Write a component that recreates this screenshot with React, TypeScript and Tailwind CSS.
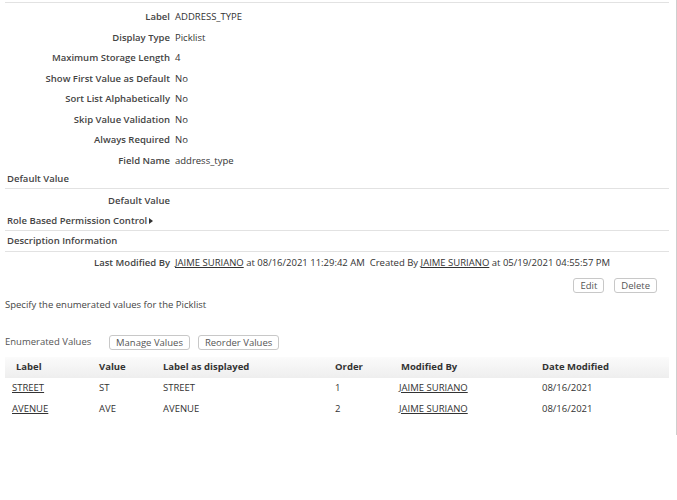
import React from "react";

const fields = [
  { label: "Label", value: "ADDRESS_TYPE" },
  { label: "Display Type", value: "Picklist" },
  { label: "Maximum Storage Length", value: "4" },
  { label: "Show First Value as Default", value: "No" },
  { label: "Sort List Alphabetically", value: "No" },
  { label: "Skip Value Validation", value: "No" },
  { label: "Always Required", value: "No" },
  { label: "Field Name", value: "address_type" },
];

const rows = [
  { label: "STREET", value: "ST", shown: "STREET", order: "1", by: "JAIME SURIANO", date: "08/16/2021" },
  { label: "AVENUE", value: "AVE", shown: "AVENUE", order: "2", by: "JAIME SURIANO", date: "08/16/2021" },
];

function Btn({ children }: { children: React.ReactNode }) {
  return (
    <button className="h-[15px] rounded-[3px] border border-[#c8c8c8] bg-white px-[6px] text-[9.5px] leading-[13px] text-[#555]">
      {children}
    </button>
  );
}

export default function App() {
  return (
    <div className="relative h-[500px] w-[677px] bg-white text-[9.5px] text-[#333]" style={{ fontFamily: '"Open Sans", "Liberation Sans", sans-serif' }}>
      <div className="absolute right-0 top-0 h-[435px] w-px bg-[#cfcfcf]" />
      <div className="pr-[8px] pl-[5px] pt-[2px]">
        <div className="h-px bg-[#e2e2e2]" />

        {/* Field details */}
        <div className="pt-[4px]">
          {fields.map((f) => (
            <div key={f.label} className="flex h-[20.5px] items-center">
              <span className="w-[165px] text-right font-semibold text-[#444]">{f.label}</span>
              <span className="pl-[5px]">{f.value}</span>
            </div>
          ))}
        </div>

        <div className="flex h-[18px] items-center border-b border-[#e2e2e2] pl-[2px] font-semibold text-[#444]">Default Value</div>
        <div className="flex h-[23px] items-center">
          <span className="w-[165px] pt-[2px] text-right font-semibold text-[#444]">Default Value</span>
        </div>
        <div className="flex h-[19px] items-center border-b border-[#e2e2e2] pl-[2px] font-semibold text-[#444]">
          Role Based Permission Control
          <svg width="5" height="6" viewBox="0 0 5 6" className="ml-[2px]">
            <path d="M0 0L4 3L0 6Z" fill="#333" />
          </svg>
        </div>
        <div className="flex h-[21px] items-center border-b border-[#e2e2e2] pl-[2px] font-semibold text-[#444]">Description Information</div>

        <div className="flex h-[23px] items-center">
          <span className="w-[165px] text-right font-semibold text-[#444]">Last Modified By</span>
          <span className="pl-[5px]">
            <span className="underline">JAIME SURIANO</span> at 08/16/2021 11:29:42 AM&nbsp;&nbsp;Created By <span className="underline">JAIME SURIANO</span> at 05/19/2021 04:55:57 PM
          </span>
        </div>
        <div className="flex h-[20px] items-center justify-end gap-[10px] pr-[12px]">
          <Btn>Edit</Btn>
          <Btn>Delete</Btn>
        </div>
        <div className="flex h-[21px] items-center text-[#444]">Specify the enumerated values for the Picklist</div>

        <div className="mt-[16px] flex h-[20px] items-center">
          <span className="w-[104px] text-[#555]">Enumerated Values</span>
          <div className="flex gap-[8px]">
            <Btn>Manage Values</Btn>
            <Btn>Reorder Values</Btn>
          </div>
        </div>

        {/* Enumerated values table */}
        <div className="mt-[5px]">
          <div className="flex h-[21px] items-center bg-gradient-to-b from-[#fbfbfb] to-[#eeeeee] font-bold text-[#333]">
            <span className="w-[94px] pl-[11px]">Label</span>
            <span className="w-[64px]">Value</span>
            <span className="w-[172px]">Label as displayed</span>
            <span className="w-[66px]">Order</span>
            <span className="w-[141px]">Modified By</span>
            <span>Date Modified</span>
          </div>
          {rows.map((r) => (
            <div key={r.label} className="flex h-[20.5px] items-center">
              <span className="w-[94px] pl-[7px] underline">{r.label}</span>
              <span className="w-[64px]">{r.value}</span>
              <span className="w-[172px]">{r.shown}</span>
              <span className="w-[64px]">{r.order}</span>
              <span className="w-[143px] underline">{r.by}</span>
              <span>{r.date}</span>
            </div>
          ))}
        </div>
      </div>
    </div>
  );
}
